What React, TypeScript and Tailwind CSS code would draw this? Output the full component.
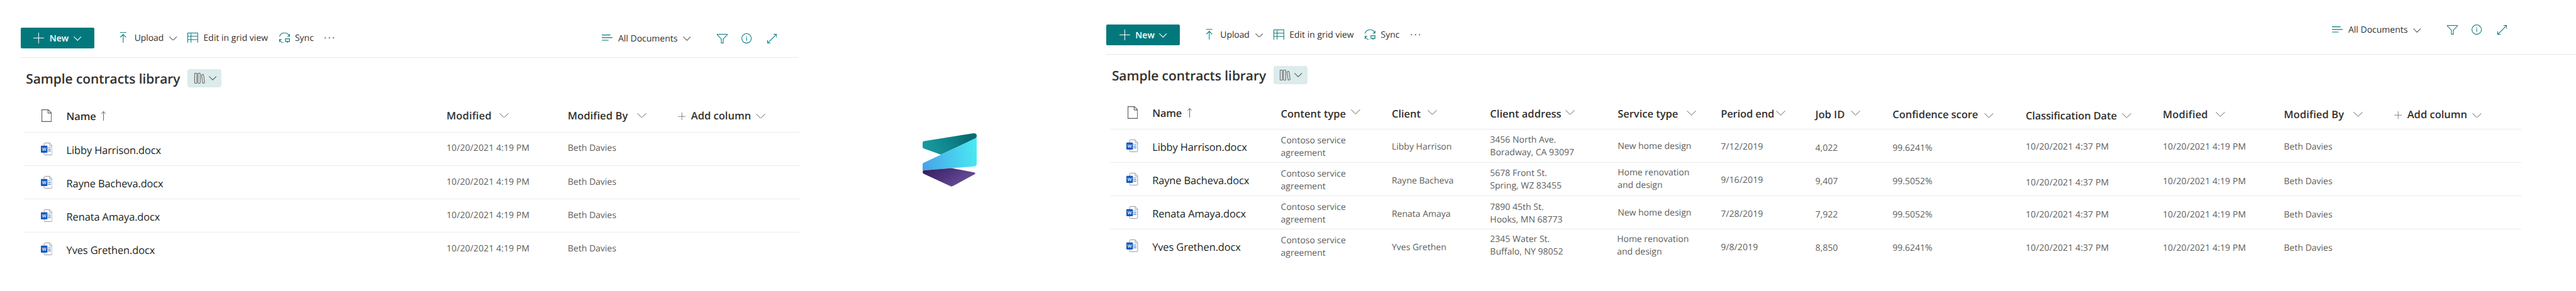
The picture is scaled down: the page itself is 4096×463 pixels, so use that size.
import type { ReactNode } from "react";

/* ---------- icons ---------- */

const Chevron = ({ className = "" }: { className?: string }) => (
  <svg viewBox="0 0 20 11" className={`h-[6.9px] w-[12.5px] shrink-0 ${className}`} fill="none" stroke="currentColor" strokeWidth="1.7">
    <path d="M.6.6 10 9.9 19.4.6" />
  </svg>
);

const WideChevron = ({ className = "" }: { className?: string }) => (
  <svg viewBox="0 0 24 12.6" className={`h-[7.8px] w-[15px] shrink-0 text-[#605e5c] ${className}`} fill="none" stroke="currentColor" strokeWidth="1.6">
    <path d="M.6.6 12 11.6 23.4.6" />
  </svg>
);

const Plus = ({ className = "" }: { className?: string }) => (
  <svg viewBox="0 0 27 27" className={`shrink-0 ${className}`} fill="none" stroke="currentColor" strokeWidth="1.6">
    <path d="M13.5 0V27M0 13.5H27" />
  </svg>
);

const UploadIcon = ({ className = "" }: { className?: string }) => (
  <svg viewBox="0 0 15.6 27.4" className={`h-[17.1px] w-[9.7px] shrink-0 ${className}`} fill="none" stroke="currentColor" strokeWidth="1.7">
    <path d="M0 1H15.6M7.8 5.8V27.4M.5 13.3 7.8 6 15.1 13.3" />
  </svg>
);

const GridIcon = ({ className = "" }: { className?: string }) => (
  <svg viewBox="0 0 27 27" className={`size-[16.9px] shrink-0 ${className}`} fill="none" stroke="currentColor" strokeWidth="1.6">
    <path d="M.8.8H26.2V26.2H.8ZM9.2.8V26.2M.8 9.2H26.2M.8 17.4H26.2" />
  </svg>
);

const SyncIcon = ({ className = "" }: { className?: string }) => (
  <svg viewBox="0 0 27 27" className={`size-[16.9px] shrink-0 ${className}`} fill="none" stroke="currentColor" strokeWidth="1.7">
    <path d="M.8 10A13 13 0 0 1 25.6 9.2M26.1 3V9.3H20M.8 23.6V17.2H6.6M1 17.6A13 13 0 0 0 15 26" />
    <path d="M15.8 15.8H26.2V22.2H15.8ZM21 22.2V26M18.2 26H23.8" />
  </svg>
);

const MoreIcon = ({ className = "" }: { className?: string }) => (
  <svg viewBox="0 0 25 4" className={`h-[2.5px] w-[15.6px] shrink-0 text-[#605e5c] ${className}`} fill="currentColor">
    <circle cx="2" cy="2" r="1.8" />
    <circle cx="12.4" cy="2" r="1.8" />
    <circle cx="22.8" cy="2" r="1.8" />
  </svg>
);

const ListIcon = ({ className = "" }: { className?: string }) => (
  <svg viewBox="0 0 27 15.5" className={`h-[9.7px] w-[16.9px] shrink-0 ${className}`} fill="none" stroke="currentColor" strokeWidth="1.8">
    <path d="M0 1H21.8M0 7.8H27M0 14.4H17" />
  </svg>
);

const FilterIcon = ({ className = "" }: { className?: string }) => (
  <svg viewBox="0 0 27 24" className={`h-[15px] w-[16.9px] shrink-0 ${className}`} fill="none" stroke="currentColor" strokeWidth="1.7">
    <path d="M.9.8H26.1V2.6L16 12.6V23.2H11V12.6L.9 2.6Z" />
  </svg>
);

const InfoIcon = ({ className = "" }: { className?: string }) => (
  <svg viewBox="0 0 26 26" className={`size-[16.2px] shrink-0 ${className}`} fill="none" stroke="currentColor" strokeWidth="1.7">
    <circle cx="13" cy="13" r="12.1" />
    <path d="M13 10.6V19M13 6.9V8.9" />
  </svg>
);

const ExpandIcon = ({ className = "" }: { className?: string }) => (
  <svg viewBox="0 0 24.5 24.5" className={`size-[15.3px] shrink-0 ${className}`} fill="none" stroke="currentColor" strokeWidth="1.7">
    <path d="M1.2 23.3 23.3 1.2M15.8.9H23.6V8.7M.9 15.8V23.6H8.7" />
  </svg>
);

const BooksIcon = ({ className = "" }: { className?: string }) => (
  <svg viewBox="0 0 27 27" className={`size-[16.9px] shrink-0 text-[#605e5c] ${className}`} fill="none" stroke="currentColor" strokeWidth="1.6">
    <rect x=".8" y=".8" width="5.6" height="25.4" rx="1.4" />
    <rect x="9.3" y=".8" width="5.6" height="25.4" rx="1.4" />
    <rect x="19.6" y="4" width="5.2" height="22" rx="1.4" transform="rotate(-8 22.2 15)" />
  </svg>
);

const PageIcon = ({ className = "" }: { className?: string }) => (
  <svg viewBox="0 0 26 32" className={`h-[20px] w-[16.2px] shrink-0 text-[#605e5c] ${className}`} fill="none" stroke="currentColor" strokeWidth="1.8">
    <path d="M.9.9H17.2L25.1 8.8V31.1H.9ZM16.6 1V9.4H25" />
  </svg>
);

const SortUp = ({ className = "" }: { className?: string }) => (
  <svg viewBox="0 0 11.6 24" className={`h-[15px] w-[7.2px] shrink-0 text-[#605e5c] ${className}`} fill="none" stroke="currentColor" strokeWidth="1.6">
    <path d="M5.8.8V24M.4 6.2 5.8.8 11.2 6.2" />
  </svg>
);

const WordIcon = ({ className = "" }: { className?: string }) => (
  <svg viewBox="0 0 29.4 32" className={`h-[20px] w-[18.4px] shrink-0 ${className}`}>
    <path d="M10 .8H22.3L28.6 7.4V29.4Q28.6 31.2 26.8 31.2H10Q8.2 31.2 8.2 29.4V2.6Q8.2.8 10 .8Z" fill="#fff" stroke="#979593" strokeWidth="1.5" />
    <path d="M22.3 1V6.4Q22.3 8.2 24 8.2H28.4" fill="none" stroke="#979593" strokeWidth="1.5" />
    <path d="M18 12.6H25.4" stroke="#41a5ee" strokeWidth="1.7" />
    <path d="M18 16.8H25.4" stroke="#2b7cd3" strokeWidth="1.7" />
    <path d="M18 21H25.4" stroke="#185abd" strokeWidth="1.7" />
    <rect x="0" y="7.7" width="16.6" height="18" rx="1.6" fill="#185abd" />
    <text x="8.3" y="21" textAnchor="middle" fontFamily="Open Sans, sans-serif" fontWeight="600" fontSize="11.5" fill="#fff">W</text>
  </svg>
);

const SyntexLogo = () => (
  <svg viewBox="300 180 415 410" className="h-[85.3px] w-[86.4px]">
    <defs>
      <linearGradient id="teal" x1="0" y1="0.4" x2="1" y2="0.2">
        <stop offset="0" stopColor="#189a9f" />
        <stop offset="0.5" stopColor="#0e8388" />
        <stop offset="0.85" stopColor="#056c73" />
      </linearGradient>
      <linearGradient id="sky" x1="0" y1="0.6" x2="1" y2="0.5">
        <stop offset="0" stopColor="#4aa3e8" />
        <stop offset="0.55" stopColor="#49caee" />
        <stop offset="1" stopColor="#48e9f3" />
      </linearGradient>
      <linearGradient id="plum" x1="0" y1="0.1" x2="0.8" y2="0.5">
        <stop offset="0" stopColor="#341f60" />
        <stop offset="0.55" stopColor="#4c327a" />
        <stop offset="1" stopColor="#60478f" />
      </linearGradient>
    </defs>
    <path d="M312 240 690 180Q714 180 714 202 712 215 702 220L440 344 308 297Q300 293 300 286V251Q300 242 312 240Z" fill="url(#teal)" />
    <path d="M714 202V412Q714 431 696 433L522 447 312 463Q300 466 300 477V418Q300 410 308 406L702 220Q712 214 714 202Z" fill="url(#sky)" />
    <path d="M312 463 522 447 698 480Q706 486 699 492L534 583Q520 591 508 583L308 490Q300 485 300 477 300 465 312 463Z" fill="url(#plum)" />
  </svg>
);

/* ---------- toolbar and title ---------- */

function CommandBar({ viewClass }: { viewClass: string }) {
  return (
    <div className="ml-[32.6px] flex h-[48px] items-start border-b border-[#e8e8e8] text-[14px] leading-[19px] text-[#323130]">
      <button className="flex h-[33px] w-[117px] items-start rounded-[2px] bg-[#03787c] text-white">
        <Plus className="mt-[7.8px] ml-[20.9px] size-[16.9px]" />
        <span className="mt-[7px] ml-[8.4px] w-[37.8px] text-left font-semibold">New</span>
        <Chevron className="mt-[14.2px]" />
      </button>
      <UploadIcon className="mt-[7.3px] ml-[41.8px] text-[#03787c]" />
      <span className="mt-[7px] ml-[12.7px] w-[55.6px] tracking-[-0.1px]">Upload</span>
      <Chevron className="mt-[13.5px] text-[#605e5c]" />
      <GridIcon className="mt-[7.6px] ml-[16.4px] text-[#03787c]" />
      <span className="mt-[7px] ml-[8.4px] w-[120.1px]">Edit in grid view</span>
      <SyncIcon className="mt-[7.6px] text-[#03787c]" />
      <span className="mt-[7px] ml-[8.4px] w-[47.1px]">Sync</span>
      <MoreIcon className="mt-[15px]" />
      <div className={`ml-auto flex items-start ${viewClass}`}>
        <ListIcon className="mt-[1.6px] text-[#03787c]" />
        <span className="-mt-[2px] ml-[8.9px] w-[102.8px]">All Documents</span>
        <Chevron className="mt-[4.7px] text-[#605e5c]" />
        <FilterIcon className="ml-[41.8px] text-[#03787c]" />
        <InfoIcon className="-mt-[1px] ml-[22.5px] text-[#03787c]" />
        <ExpandIcon className="ml-[24.1px] text-[#03787c]" />
      </div>
    </div>
  );
}

const LibraryTitle = () => (
  <div className="flex h-[76px] items-start pl-[41.3px]">
    <h1 className="mt-[20px] w-[257.1px] text-[21px] leading-[28px] font-semibold tracking-[-0.08px] text-[#323130]">
      Sample contracts library
    </h1>
    <button className="mt-[18px] flex h-[29px] w-[54px] items-start rounded-[4px] bg-[#dcebeb]">
      <BooksIcon className="mt-[6.1px] ml-[10.3px]" />
      <Chevron className="mt-[11.4px] ml-[6.3px] text-[#605e5c]" />
    </button>
  </div>
);

/* ---------- table ---------- */

type Column = { title: string; text: string; label: string; chevron: string };
type Row = { name: string; cells: [string, string][] };

const HeadCell = ({ col }: { col: Column }) => (
  <div className="flex items-start">
    <span className={`leading-[23px] whitespace-nowrap ${col.text} ${col.label}`}>{col.title}</span>
    <WideChevron className={`-ml-px ${col.chevron}`} />
  </div>
);

const AddColumn = ({ className, plus, chevron }: { className: string; plus: string; chevron: string }) => (
  <div className="-ml-px flex items-start">
    <Plus className={`size-[12.5px] text-[#605e5c] ${plus}`} />
    <span className={`ml-[8.4px] w-[103px] leading-[23px] whitespace-nowrap ${className}`}>Add column</span>
    <WideChevron className={chevron} />
  </div>
);

const NameHead = () => (
  <>
    <div className="pl-[27.8px]">
      <PageIcon className="mt-[6px]" />
    </div>
    <div className="flex items-start">
      <span className="mt-[5px] w-[55.8px] leading-[23px] tracking-[-0.2px]">Name</span>
      <SortUp className="mt-[9px]" />
    </div>
  </>
);

const NameCells = ({ name }: { name: string }) => (
  <>
    <div className="pl-[26.7px]">
      <WordIcon className="mt-[16.3px]" />
    </div>
    <div className="pt-[16px] text-[16.5px] leading-[23px] tracking-[-0.15px] text-[#201f1e]">{name}</div>
  </>
);

const Cell = ({ className, children }: { className: string; children: ReactNode }) => (
  <div className={`leading-[20px] whitespace-pre-line ${className}`}>{children}</div>
);

function Table({ cols, width, head, rows }: { cols: string; width: string; head: ReactNode; rows: Row[] }) {
  return (
    <div className={`ml-[38.2px] ${width}`}>
      <div className={`grid h-[43px] border-b border-[#ebebeb] text-[16.5px] font-semibold text-[#323130] ${cols}`}>
        <NameHead />
        {head}
      </div>
      {rows.map((row, i) => (
        <div
          key={row.name}
          className={`grid h-[53px] text-[14px] text-[#605e5c] ${cols} ${i < rows.length - 1 ? "border-b border-[#ebebeb]" : ""}`}
        >
          <NameCells name={row.name} />
          {row.cells.map(([text, cls], j) => (
            <Cell key={j} className={cls}>{text}</Cell>
          ))}
        </div>
      ))}
    </div>
  );
}

/* ---------- data ---------- */

const D = "tracking-[0.1px]";

const basicColumns: Column[] = [
  { title: "Modified", text: "mt-[4px] tracking-[0.15px]", label: "w-[85.2px]", chevron: "mt-[11.7px]" },
  { title: "Modified By", text: "mt-[4px] tracking-[0.1px]", label: "w-[111.6px]", chevron: "mt-[11.7px]" },
];

const basicRows: Row[] = [
  { name: "Libby Harrison.docx", cells: [["10/20/2021 4:19 PM", `pt-[15px] ${D}`], ["Beth Davies", "pt-[15px]"]] },
  { name: "Rayne Bacheva.docx", cells: [["10/20/2021 4:19 PM", `pt-[16px] ${D}`], ["Beth Davies", "pt-[16px]"]] },
  { name: "Renata Amaya.docx", cells: [["10/20/2021 4:19 PM", `pt-[16px] ${D}`], ["Beth Davies", "pt-[16px]"]] },
  { name: "Yves Grethen.docx", cells: [["10/20/2021 4:19 PM", `pt-[16px] ${D}`], ["Beth Davies", "pt-[16px]"]] },
];

const fullColumns: Column[] = [
  { title: "Content type", text: "mt-[6px]", label: "w-[112.6px]", chevron: "mt-[11.1px]" },
  { title: "Client", text: "mt-[6px]", label: "w-[58.4px]", chevron: "mt-[11.8px]" },
  { title: "Client address", text: "mt-[6px]", label: "w-[121px]", chevron: "mt-[11.8px]" },
  { title: "Service type", text: "mt-[6px]", label: "w-[110.6px]", chevron: "mt-[12.9px]" },
  { title: "Period end", text: "mt-[6px] tracking-[-0.12px]", label: "w-[89.3px]", chevron: "mt-[12.9px]" },
  { title: "Job ID", text: "mt-[7px]", label: "w-[57.5px]", chevron: "mt-[12.9px]" },
  { title: "Confidence score", text: "mt-[7px] tracking-[-0.05px]", label: "w-[146.6px]", chevron: "mt-[16.8px]" },
  { title: "Classification Date", text: "mt-[9px] tracking-[-0.13px]", label: "w-[153.6px]", chevron: "mt-[16.8px]" },
  { title: "Modified", text: "mt-[7px] tracking-[0.15px]", label: "w-[84.8px]", chevron: "mt-[15.3px]" },
  { title: "Modified By", text: "mt-[7px] tracking-[0.1px]", label: "w-[111.7px]", chevron: "mt-[15.3px]" },
];

const fullRows: Row[] = [
  {
    name: "Libby Harrison.docx",
    cells: [
      ["Contoso service\nagreement", "pt-[8px]"],
      ["Libby Harrison", "pt-[18px]"],
      ["3456 North Ave.\nBoradway, CA 93097", "pt-[7px]"],
      ["New home design", "pt-[17px]"],
      ["7/12/2019", `pt-[18px] ${D}`],
      ["4,022", "pt-[20px]"],
      ["99.6241%", "pt-[20px]"],
      ["10/20/2021 4:37 PM", `pt-[18px] ${D}`],
      ["10/20/2021 4:19 PM", `pt-[18px] ${D}`],
      ["Beth Davies", "pt-[18px]"],
    ],
  },
  {
    name: "Rayne Bacheva.docx",
    cells: [
      ["Contoso service\nagreement", "pt-[8px]"],
      ["Rayne Bacheva", "pt-[19px]"],
      ["5678 Front St.\nSpring, WZ 83455", "pt-[7px]"],
      ["Home renovation\nand design", "pt-[6px]"],
      ["9/16/2019", `pt-[18px] ${D}`],
      ["9,407", "pt-[20px]"],
      ["99.5052%", "pt-[20px]"],
      ["10/20/2021 4:37 PM", `pt-[22px] ${D}`],
      ["10/20/2021 4:19 PM", `pt-[20px] ${D}`],
      ["Beth Davies", "pt-[20px]"],
    ],
  },
  {
    name: "Renata Amaya.docx",
    cells: [
      ["Contoso service\nagreement", "pt-[8px]"],
      ["Renata Amaya", "pt-[19px]"],
      ["7890 45th St.\nHooks, MN 68773", "pt-[8px]"],
      ["New home design", "pt-[17px]"],
      ["7/28/2019", `pt-[19px] ${D}`],
      ["7,922", "pt-[20px]"],
      ["99.5052%", "pt-[20px]"],
      ["10/20/2021 4:37 PM", `pt-[20px] ${D}`],
      ["10/20/2021 4:19 PM", `pt-[20px] ${D}`],
      ["Beth Davies", "pt-[20px]"],
    ],
  },
  {
    name: "Yves Grethen.docx",
    cells: [
      ["Contoso service\nagreement", "pt-[8px]"],
      ["Yves Grethen", "pt-[19px]"],
      ["2345 Water St.\nBuffalo, NY 98052", "pt-[6px]"],
      ["Home renovation\nand design", "-ml-px pt-[6px]"],
      ["9/8/2019", `pt-[19px] ${D}`],
      ["8,850", "pt-[20px]"],
      ["99.6241%", "pt-[20px]"],
      ["10/20/2021 4:37 PM", `pt-[20px] ${D}`],
      ["10/20/2021 4:19 PM", `pt-[20px] ${D}`],
      ["Beth Davies", "pt-[20px]"],
    ],
  },
];

/* ---------- page ---------- */

export default function App() {
  return (
    <main className="flex h-[463px] w-[4096px] items-start overflow-hidden bg-white font-['Open_Sans','Noto_Sans',sans-serif] [text-rendering:geometricPrecision]">
      <section className="w-[1271px] shrink-0 pt-[44px]">
        <div className="w-[1269px]">
          <CommandBar viewClass="mt-[9.7px] mr-[34px]" />
        </div>
        <LibraryTitle />
        <Table
          cols="grid-cols-[67.4px_604.4px_192.8px_176.2px_1fr]"
          width="w-[1232.5px]"
          head={
            <>
              {basicColumns.map((c) => (
                <HeadCell key={c.title} col={c} />
              ))}
              <AddColumn className="mt-[4px]" plus="mt-[10.6px]" chevron="mt-[12.6px]" />
            </>
          }
          rows={basicRows}
        />
      </section>

      <div className="w-[455.6px] shrink-0 pt-[212.2px] pl-[195.9px]">
        <SyntexLogo />
      </div>

      <section className="min-w-0 flex-1 pt-[39px]">
        <CommandBar viewClass="mt-[1.4px] mr-[110px]" />
        <LibraryTitle />
        <Table
          cols="grid-cols-[67.4px_204.4px_176.4px_156.4px_202.8px_164px_150.4px_122.8px_211.7px_218px_192.5px_176.3px_1fr]"
          width="w-[2244px]"
          head={
            <>
              {fullColumns.map((c) => (
                <HeadCell key={c.title} col={c} />
              ))}
              <AddColumn className="mt-[7px]" plus="mt-[14px]" chevron="mt-[16.5px]" />
            </>
          }
          rows={fullRows}
        />
      </section>
    </main>
  );
}
